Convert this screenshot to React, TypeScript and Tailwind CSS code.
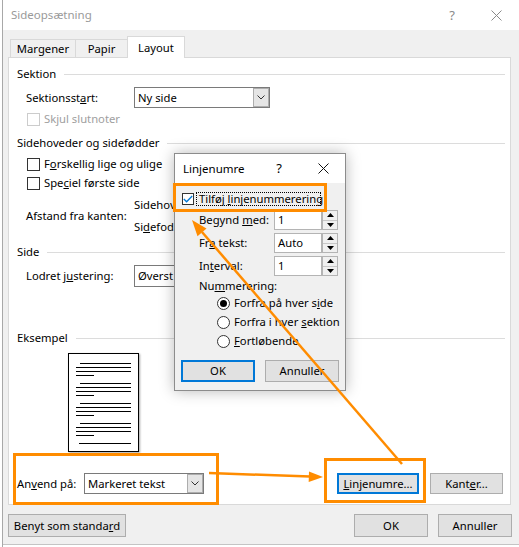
import React from "react";

const ORANGE = "#ff8c00";

function XIcon({ color }: { color: string }) {
  return (
    <svg width="11" height="11" viewBox="0 0 11 11">
      <path d="M0.5 0.5 L10.5 10.5 M10.5 0.5 L0.5 10.5" stroke={color} strokeWidth="1" fill="none" />
    </svg>
  );
}

function Chevron() {
  return (
    <svg width="8" height="5" viewBox="0 0 8 5">
      <path d="M0.5 0.5 L4 4 L7.5 0.5" fill="none" stroke="#333" strokeWidth="1" />
    </svg>
  );
}

function Header({ label, className }: { label: string; className: string }) {
  return (
    <div className={"flex items-center h-[16px] " + className}>
      <span className="whitespace-nowrap">{label}</span>
      <div className="flex-1 h-px bg-[#dcdcdc] ml-[8px]" />
    </div>
  );
}

function Box({ disabled }: { disabled?: boolean }) {
  return (
    <div
      className={
        disabled
          ? "w-[13px] h-[13px] border border-[#cccccc] bg-white"
          : "w-[13px] h-[13px] border border-[#333333] bg-white"
      }
    />
  );
}

function SelectArrow() {
  return (
    <div className="w-[16px] h-full bg-[#e5e5e5] border border-[#adadad] flex items-center justify-center">
      <Chevron />
    </div>
  );
}

function Spin() {
  return (
    <div className="w-[16px] h-[20px] border border-[#b4b4b4] bg-[#f0f0f0] flex flex-col">
      <div className="flex-1 border-b border-[#c8c8c8] flex items-center justify-center">
        <svg width="7" height="4" viewBox="0 0 7 4">
          <path d="M0 4 L3.5 0 L7 4 Z" fill="#000" />
        </svg>
      </div>
      <div className="flex-1 flex items-center justify-center">
        <svg width="7" height="4" viewBox="0 0 7 4">
          <path d="M0 0 L3.5 4 L7 0 Z" fill="#000" />
        </svg>
      </div>
    </div>
  );
}

function Radio({ checked }: { checked?: boolean }) {
  return (
    <div className="w-[13px] h-[13px] shrink-0 rounded-full border border-[#333333] bg-white flex items-center justify-center">
      {checked && <div className="w-[7px] h-[7px] rounded-full bg-black" />}
    </div>
  );
}

function PageLines() {
  const group = (
    <div className="flex flex-col gap-[3px]">
      <div className="h-px bg-black ml-[11px] mr-[7px]" />
      <div className="h-px bg-black ml-[7px] mr-[7px]" />
      <div className="h-px bg-black ml-[7px] mr-[7px]" />
      <div className="h-px bg-black ml-[7px] w-[18px]" />
    </div>
  );
  return (
    <div className="w-[71px] h-[99px] border border-black bg-white shadow-[1px_1px_2px_rgba(0,0,0,0.35)] overflow-hidden flex flex-col gap-[7px] pt-[9px]">
      {group}
      {group}
      {group}
      {group}
      <div className="h-px bg-black ml-[10px] mr-[7px]" />
    </div>
  );
}

export default function App() {
  return (
    <div className="relative w-[519px] h-[547px] bg-white flex overflow-hidden font-['Noto_Sans',sans-serif] text-[11.25px] text-black leading-none whitespace-nowrap">
      <div className="w-[2px] bg-white" />
      <div className="w-px bg-[#a8a8a8]" />
      <div className="flex-1 flex flex-col bg-[#f0f0f0] h-[545px] border-b border-[#c4c4c4]">
        {/* title bar */}
        <div className="h-[30px] shrink-0 bg-white flex items-center">
          <span className="pl-[8px] text-[11.5px] text-[#9a9a9a] flex-1">Sideopsætning</span>
          <div className="w-[44px] flex justify-center text-[13px] text-[#8a8a8a]">?</div>
          <div className="w-[44px] flex justify-center">
            <XIcon color="#8a8a8a" />
          </div>
          <div className="w-px" />
        </div>

        {/* tabs */}
        <div className="h-[27px] shrink-0 pt-[6px] pl-[7px] flex items-end">
          <div className="h-[18px] w-[66px] border border-b-0 border-[#d9d9d9] flex items-center justify-center">
            Margener
          </div>
          <div className="h-[18px] w-[53px] -ml-px border border-b-0 border-[#d9d9d9] flex items-center justify-center">
            Papir
          </div>
          <div className="relative z-10 h-[22px] w-[58px] -ml-px -mb-px bg-white border border-b-0 border-[#d9d9d9] flex items-center justify-center">
            Layout
          </div>
        </div>

        {/* panel */}
        <div className="ml-[5px] w-[503px] h-[448px] shrink-0 border border-[#d9d9d9] bg-white flex flex-col pl-[8px] pr-[5px]">
          <Header label="Sektion" className="mt-[8px]" />
          <div className="mt-[5px] h-[21px] flex items-center pl-[9px]">
            <span className="w-[108px]">
              Sektionsst<u>a</u>rt:
            </span>
            <div className="w-[136px] h-[21px] border border-[#7a7a7a] flex items-center">
              <span className="flex-1 pl-[3px]">Ny side</span>
              <SelectArrow />
            </div>
          </div>
          <div className="mt-[4px] h-[14px] flex items-center pl-[10px] gap-[4px] text-[#a0a0a0]">
            <Box disabled />
            <span>Skjul slutnoter</span>
          </div>

          <Header label="Sidehoveder og sidefødder" className="mt-[9px]" />
          <div className="mt-[6px] h-[14px] flex items-center pl-[10px] gap-[4px]">
            <Box />
            <span>
              F<u>o</u>rskellig lige og ulige
            </span>
          </div>
          <div className="mt-[5px] h-[14px] flex items-center pl-[10px] gap-[4px]">
            <Box />
            <span>
              Spe<u>c</u>iel første side
            </span>
          </div>
          <div className="mt-[4px] h-[44px] flex items-center pl-[9px]">
            <span className="w-[108px]">Afstand fra kanten:</span>
            <div className="flex flex-col">
              <div className="h-[22px] flex items-center">
                Sidehove<u>d</u>:
              </div>
              <div className="h-[22px] flex items-center">
                Si<u>d</u>efod:
              </div>
            </div>
          </div>

          <Header label="Side" className="mt-[6px]" />
          <div className="mt-[5px] h-[22px] flex items-center pl-[9px]">
            <span className="w-[108px]">
              Lodret j<u>u</u>stering:
            </span>
            <div className="w-[136px] h-[22px] border border-[#7a7a7a] flex items-center">
              <span className="flex-1 pl-[3px]">Øverst</span>
              <SelectArrow />
            </div>
          </div>

          <Header label="Eksempel" className="mt-[43px]" />
          <div className="mt-[7px] pl-[51px]">
            <PageLines />
          </div>

          <div className="mt-[21px] h-[21px] flex items-center pr-[2px]">
            <span className="w-[67px]">
              An<u>v</u>end på:
            </span>
            <div className="w-[120px] h-[21px] border border-[#7a7a7a] flex items-center">
              <span className="flex-1 pl-[3px]">Markeret tekst</span>
              <SelectArrow />
            </div>
            <div className="flex-1" />
            <div className="w-[82px] h-[21px] border-2 border-[#0078d7] bg-[#e1e1e1] flex items-center justify-center">
              <span>
                <u>L</u>injenumre...
              </span>
            </div>
            <div className="ml-[11px] w-[73px] h-[21px] border border-[#adadad] bg-[#e1e1e1] flex items-center justify-center">
              <span>
                Kant<u>e</u>r...
              </span>
            </div>
          </div>
        </div>

        {/* bottom buttons */}
        <div className="mt-[9px] h-[23px] flex items-center pl-[5px] pr-[7px]">
          <div className="w-[118px] h-[23px] border border-[#adadad] bg-[#e1e1e1] flex items-center justify-center">
            <span>
              Benyt som standa<u>r</u>d
            </span>
          </div>
          <div className="flex-1" />
          <div className="w-[74px] h-[23px] border border-[#adadad] bg-[#e1e1e1] flex items-center justify-center">
            OK
          </div>
          <div className="ml-[10px] w-[74px] h-[23px] border border-[#adadad] bg-[#e1e1e1] flex items-center justify-center">
            Annuller
          </div>
        </div>
      </div>

      {/* sub dialog */}
      <div className="absolute left-[174px] top-[153px] w-[172px] h-[238px] bg-[#f0f0f0] border border-[#8c8c8c] shadow-[0_0_14px_rgba(0,0,0,0.28)] flex flex-col">
        <div className="h-[29px] bg-white flex items-center">
          <span className="pl-[8px] text-[11.5px] flex-1">Linjenumre</span>
          <div className="w-[44px] flex justify-center text-[13px]">?</div>
          <div className="w-[44px] flex justify-center">
            <XIcon color="#111" />
          </div>
        </div>
        <div className="mt-[9px] h-[14px] flex items-center pl-[7px]">
          <div className="w-[12px] h-[12px] border border-[#333] bg-white flex items-center justify-center">
            <svg width="10" height="8" viewBox="0 0 10 8">
              <path d="M0.8 4 L3.6 6.8 L9.2 1" fill="none" stroke="#0078d7" strokeWidth="1.3" />
            </svg>
          </div>
          <div className="ml-[2px] w-[125px] h-[14px] border border-dotted border-black flex items-center pl-[2px]">
            Tilføj&nbsp;<u>l</u>injenummerering
          </div>
        </div>
        {[
          { l: <>Begynd <u>m</u>ed:</>, v: "1" },
          { l: <>Fr<u>a</u> tekst:</>, v: "Auto" },
          { l: <>In<u>t</u>erval:</>, v: "1" },
        ].map((r, i) => (
          <div key={i} className={(i === 0 ? "mt-[4px]" : "mt-[3px]") + " h-[20px] flex items-center pl-[24px]"}>
            <span className="w-[75px]">{r.l}</span>
            <div className="w-[48px] h-[20px] border border-[#b4b4b4] bg-white flex items-center pl-[3px]">
              {r.v}
            </div>
            <Spin />
          </div>
        ))}
        <div className="mt-[3px] h-[14px] flex items-center pl-[24px]">
          Nu<u>m</u>merering:
        </div>
        <div className="mt-[3px] h-[14px] flex items-center pl-[42px] gap-[4px]">
          <Radio checked />
          <span>
            Forfra på hver s<u>i</u>de
          </span>
        </div>
        <div className="mt-[5px] h-[14px] flex items-center pl-[42px] gap-[4px]">
          <Radio />
          <span>
            Forfra i hver <u>s</u>ektion
          </span>
        </div>
        <div className="mt-[5px] h-[14px] flex items-center pl-[42px] gap-[4px]">
          <Radio />
          <span>
            <u>F</u>ortløbende
          </span>
        </div>
        <div className="mt-[12px] h-[22px] flex items-center pl-[6px] gap-[10px]">
          <div className="w-[74px] h-[22px] border-2 border-[#0078d7] bg-[#e1e1e1] flex items-center justify-center">
            OK
          </div>
          <div className="w-[74px] h-[22px] border border-[#adadad] bg-[#e1e1e1] flex items-center justify-center">
            Annuller
          </div>
        </div>
      </div>

      {/* annotation boxes */}
      <div className="absolute left-[173px] top-[183px] w-[154px] h-[29px] border-[3px] border-[#ff8c00]" />
      <div className="absolute left-[13px] top-[453px] w-[206px] h-[52px] border-[3px] border-[#ff8c00]" />
      <div className="absolute left-[324px] top-[458px] w-[102px] h-[45px] border-[3px] border-[#ff8c00]" />

      {/* arrows */}
      <svg className="absolute left-0 top-0 pointer-events-none" width="519" height="547" viewBox="0 0 519 547">
        <line x1="402" y1="464" x2="202" y2="232" stroke={ORANGE} strokeWidth="2.5" />
        <polygon points="192,220 206.5,228.5 197.5,236.3" fill={ORANGE} />
        <line x1="209" y1="473" x2="310" y2="476.5" stroke={ORANGE} strokeWidth="2.5" />
        <polygon points="323,477 309,471.5 308.7,482" fill={ORANGE} />
      </svg>
    </div>
  );
}
